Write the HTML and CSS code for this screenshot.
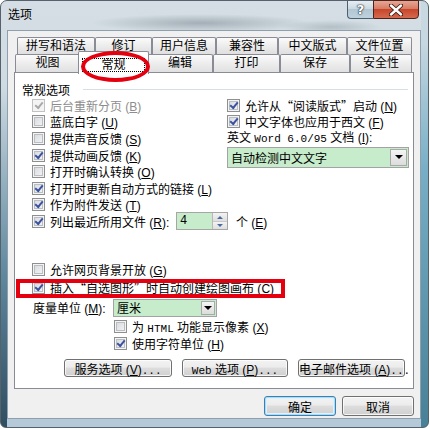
FILE: index.html
```html
<!DOCTYPE html>
<html lang="zh-CN">
<head>
    <meta charset="UTF-8">
    <title>选项</title>
    <link rel="stylesheet" href="styles.css">
</head>
<body>
    <div class="window">
        <!-- 标题栏 -->
        <div class="titlebar">
            <span class="title">选项</span>
            <div class="caption-btns">
                <span class="cap-help">?</span>
                <span class="cap-close">
                    <svg width="14" height="12" viewBox="0 0 14 12">
                        <path d="M2 1.5 L12 10.5 M12 1.5 L2 10.5" stroke="#3a1a12" stroke-width="4.2" stroke-linecap="round"/>
                        <path d="M2 1.5 L12 10.5 M12 1.5 L2 10.5" stroke="#fff" stroke-width="2.4" stroke-linecap="round"/>
                    </svg>
                </span>
            </div>
        </div>

        <div class="client">
            <!-- 选项卡 -->
            <div class="tab-row back">
                <div class="tab">拼写和语法</div>
                <div class="tab">修订</div>
                <div class="tab">用户信息</div>
                <div class="tab">兼容性</div>
                <div class="tab">中文版式</div>
                <div class="tab">文件位置</div>
            </div>
            <div class="tab-row front">
                <div class="tab">视图</div>
                <div class="tab selected"><span class="focus">常规</span></div>
                <div class="tab">编辑</div>
                <div class="tab">打印</div>
                <div class="tab">保存</div>
                <div class="tab">安全性</div>
            </div>

            <div class="panel">
                <div class="group-title"><span>常规选项</span><i class="rule"></i></div>

                <div class="cols">
                    <div class="col-left">
                        <div class="check disabled"><span class="box on"></span><span>后台重新分页 (<u>B</u>)</span></div>
                        <div class="check"><span class="box"></span><span>蓝底白字 (<u>U</u>)</span></div>
                        <div class="check"><span class="box"></span><span>提供声音反馈 (<u>S</u>)</span></div>
                        <div class="check"><span class="box on"></span><span>提供动画反馈 (<u>K</u>)</span></div>
                        <div class="check"><span class="box"></span><span>打开时确认转换 (<u>O</u>)</span></div>
                        <div class="check"><span class="box on"></span><span>打开时更新自动方式的链接 (<u>L</u>)</span></div>
                        <div class="check"><span class="box on"></span><span>作为附件发送 (<u>T</u>)</span></div>
                        <div class="check">
                            <span class="box on"></span>
                            <span class="recent-label">列出最近所用文件 (<u>R</u>):</span>
                            <span class="spin">
                                <span class="spin-val">4</span>
                                <span class="spin-btns">
                                    <span class="spin-up"><i></i></span>
                                    <span class="spin-down"><i></i></span>
                                </span>
                            </span>
                            <span class="unit">个 (<u>E</u>)</span>
                        </div>
                    </div>
                    <div class="col-right">
                        <div class="check"><span class="box on"></span><span>允许从<span class="cq">“阅读版式”</span>启动 (<u>N</u>)</span></div>
                        <div class="check"><span class="box on"></span><span>中文字体也应用于西文 (<u>F</u>)</span></div>
                        <div class="field-label">英文 <span class="lat">Word 6.0/95</span> 文档 (<u>I</u>):</div>
                        <div class="combo wide">
                            <span class="combo-text">自动检测中文文字</span>
                            <span class="combo-btn"><i></i></span>
                        </div>
                    </div>
                </div>

                <div class="lower">
                    <div class="check row-18"><span class="box"></span><span>允许网页背景开放 (<u>G</u>)</span></div>
                    <div class="check row-18"><span class="box on"></span><span>插入<span class="cq">“自选图形”</span>时自动创建绘图画布 (<u>C</u>)</span></div>
                    <div class="measure">
                        <span class="measure-label">度量单位 (<u>M</u>):</span>
                        <div class="combo small">
                            <span class="combo-text">厘米</span>
                            <span class="combo-btn"><i></i></span>
                        </div>
                    </div>
                    <div class="check row-18 sub"><span class="box"></span><span>为 <span class="lat">HTML</span> 功能显示像素 (<u>X</u>)</span></div>
                    <div class="check row-16 sub"><span class="box on"></span><span>使用字符单位 (<u>H</u>)</span></div>

                    <div class="panel-btns">
                        <button class="btn w108">服务选项 (<u>V</u>)<span class="lat">...</span></button>
                        <button class="btn w106"><span class="lat">Web</span>&nbsp;选项 (<u>P</u>)<span class="lat">...</span></button>
                        <button class="btn w107">电子邮件选项 (<u>A</u>)<span class="lat">...</span></button>
                    </div>
                </div>
            </div>

            <div class="dialog-btns">
                <button class="btn default">确定</button>
                <button class="btn">取消</button>
            </div>
        </div>

        <!-- 标注 -->
        <div class="mark-ellipse"></div>
        <div class="mark-box"></div>
    </div>
</body>
</html>
```

FILE: styles.css
```css
/* 基本样式 */
* {
    box-sizing: border-box;
}

body {
    margin: 0;
    background: #fff;
    font-family: "Liberation Sans", "Noto Sans CJK SC", sans-serif;
    font-size: 12px;
    color: #000;
}

u {
    text-decoration: underline;
    text-underline-offset: 1px;
}

.lat {
    font-family: "Liberation Mono", "Noto Sans CJK SC", monospace;
    font-size: 11px;
}

/* 中文引号用全角 */
.cq {
    font-family: "Noto Sans CJK SC", sans-serif;
}

/* 窗口外框 */
.window {
    position: relative;
    width: 429px;
    height: 428px;
    border: 1px solid #56616b;
    border-radius: 7px 7px 6px 6px;
    display: flex;
    flex-direction: column;
    background:
        radial-gradient(ellipse 110px 9px at 200px 22px, rgba(105, 118, 128, 0.45), transparent),
        radial-gradient(ellipse 50px 7px at 330px 26px, rgba(120, 132, 142, 0.35), transparent),
        linear-gradient(to bottom, rgba(170, 200, 215, 0) 20%, rgba(60, 110, 135, 0.75) 65%, rgba(25, 55, 75, 0.85) 100%) left top / 6px 100% no-repeat,
        linear-gradient(to bottom, rgba(150, 195, 215, 0.2) 10%, rgba(110, 170, 195, 0.9) 40%, rgba(60, 120, 145, 0.9) 100%) right top / 7px 100% no-repeat,
        linear-gradient(to bottom, #d5dee4, #c2d4df 60%, #b4cad8);
}

/* 标题栏 */
.titlebar {
    height: 29px;
    display: flex;
    align-items: flex-start;
}

.title {
    padding: 6px 0 0 7px;
    line-height: 16px;
    font-size: 12px;
}

.caption-btns {
    margin-left: auto;
    margin-right: 9px;
    display: flex;
    margin-top: -1px;
}

.cap-help {
    width: 26px;
    height: 19px;
    border: 1px solid #4f5f6d;
    border-right: none;
    border-radius: 0 0 0 4px;
    background: linear-gradient(to bottom, #e8eef2, #ccd9e2 45%, #b3c6d3 50%, #bed2de);
    color: #fff;
    font-family: "DejaVu Sans", sans-serif;
    font-weight: bold;
    font-size: 13px;
    line-height: 17px;
    text-align: center;
    text-shadow: 0 0 1px #26333d, 0 0 1px #26333d, 0 0 2px #26333d;
}

.cap-close {
    width: 46px;
    height: 19px;
    border: 1px solid #4d2219;
    border-radius: 0 0 4px 0;
    background: linear-gradient(to bottom, #e6a796, #d77d66 45%, #c8462a 50%, #d46a50);
    display: flex;
    align-items: center;
    justify-content: center;
}

/* 客户区 */
.client {
    flex: 1;
    margin: 0 7px 8px 6px;
    border: 1px solid #8f9fae;
    background: #f0f0f0;
    padding: 6px 6px 2px 6px;
    display: flex;
    flex-direction: column;
}

/* 选项卡 */
.tab-row {
    display: grid;
}

.tab-row.back {
    height: 17px;
    margin-left: 3px;
    grid-template-columns: 78px 57px 64px 62px 69px 65px;
}

.tab-row.front {
    height: 18px;
    margin-left: 1px;
    grid-template-columns: 65px 67px 66px 67px 70px 62px;
}

.tab {
    border: 1px solid #898c95;
    border-bottom: none;
    border-radius: 2px 2px 0 0;
    background: linear-gradient(to bottom, #fbfbfb, #ececec 50%, #dfdfdf);
    text-align: center;
    line-height: 16px;
}

.tab-row.front .tab {
    line-height: 17px;
}

.tab.selected {
    position: relative;
    z-index: 2;
    margin: -3px -2px -1px -2px;
    background: #fff;
    padding-top: 5px;
}

.focus {
    display: inline-block;
    padding: 0 18px;
    line-height: 12px;
    outline: 1px dotted #000;
}

/* 选项面板 */
.panel {
    height: 317px;
    border: 1px solid #898c95;
    background: #fff;
    padding: 9px 5px 0 7px;
    display: flex;
    flex-direction: column;
}

.group-title {
    height: 15px;
    display: flex;
    align-items: center;
}

.rule {
    flex: 1;
    height: 1px;
    margin-left: 13px;
    background: #d5dfe5;
}

.cols {
    display: grid;
    grid-template-columns: 204px 1fr;
}

.col-left {
    padding-left: 10px;
}

.col-right {
    padding-left: 1px;
}

.check {
    display: flex;
    align-items: center;
    gap: 5px;
    height: 16.6px;
    white-space: nowrap;
}

.check > * {
    flex: none;
}

.check.disabled {
    color: #8d8d8d;
}

/* 复选框 */
.box {
    width: 13px;
    height: 13px;
    border: 1px solid #8e8f8f;
    background: linear-gradient(135deg, #d3d6db, #f7f7f7);
    box-shadow: inset 0 0 0 1px #f4f4f4, inset 0 0 0 2px #b9bec4;
    display: flex;
    align-items: center;
    justify-content: center;
}

.box.on::after {
    content: "";
    width: 6px;
    height: 3px;
    margin-top: -2px;
    border-left: 2px solid #3b51a0;
    border-bottom: 2px solid #3b51a0;
    transform: rotate(-50deg);
}

.disabled .box {
    border-color: #c2c2c2;
    background: #f4f4f4;
    box-shadow: none;
}

.disabled .box.on::after {
    border-color: #a9a9a9;
}

.recent-label {
    width: 121px;
}

/* 数字框 */
.spin {
    display: flex;
    width: 52px;
    height: 18px;
    border: 1px solid #a6a6a6;
}

.spin-val {
    flex: 1;
    background: #c7eccb;
    padding-left: 3px;
    line-height: 16px;
    font-family: "Liberation Mono", monospace;
}

.spin-btns {
    width: 15px;
    display: flex;
    flex-direction: column;
    border-left: 1px solid #b8b8b8;
}

.spin-up,
.spin-down {
    flex: 1;
    display: flex;
    align-items: center;
    justify-content: center;
    background: linear-gradient(to bottom, #f3f3f3, #dedede);
}

.spin-up {
    border-bottom: 1px solid #c9c9c9;
}

.spin-up i {
    border-left: 3px solid transparent;
    border-right: 3px solid transparent;
    border-bottom: 3px solid #4c6a9c;
}

.spin-down i {
    border-left: 3px solid transparent;
    border-right: 3px solid transparent;
    border-top: 3px solid #4c6a9c;
}

.unit {
    margin-left: 3px;
}

/* 下拉框 */
.field-label {
    height: 16.6px;
    line-height: 16.6px;
    white-space: nowrap;
}

.combo {
    display: flex;
    border: 1px solid #a3a3a3;
    background: #c7eccb;
}

.combo.wide {
    width: 182px;
    height: 21px;
}

.combo.small {
    width: 104px;
    height: 18px;
}

.combo-text {
    flex: 1;
    padding-left: 3px;
    display: flex;
    align-items: center;
}

.combo-btn {
    width: 17px;
    margin: 1px;
    border: 1px solid #a9a9a9;
    background: linear-gradient(to bottom, #f5f5f5, #dcdcdc);
    display: flex;
    align-items: center;
    justify-content: center;
}

.combo.small .combo-btn {
    width: 14px;
}

.combo-btn i {
    border-left: 4px solid transparent;
    border-right: 4px solid transparent;
    border-top: 4px solid #000;
}

/* 下部选项 */
.lower {
    margin-top: 31px;
    display: flex;
    flex-direction: column;
}

.lower > .check {
    padding-left: 10px;
}

.check.row-18 {
    height: 18px;
}

.check.row-16 {
    height: 16px;
}

.lower > .check.sub {
    padding-left: 92px;
}

.measure {
    height: 20px;
    margin-top: 1px;
    padding-left: 11px;
    display: flex;
    align-items: center;
}

.measure-label {
    width: 80px;
}

/* 按钮 */
.btn {
    font: inherit;
    color: #000;
    height: 18px;
    padding: 0;
    border: 1px solid #707070;
    border-radius: 3px;
    background: linear-gradient(to bottom, #f3f3f3, #ececec 45%, #dddddd 50%, #d0d0d0);
    box-shadow: inset 0 0 0 1px rgba(255, 255, 255, 0.75);
    white-space: nowrap;
    text-align: center;
}

.panel-btns {
    display: flex;
    gap: 10px;
    margin-top: 7px;
    padding-left: 42px;
}

.w108 { width: 108px; }
.w106 { width: 106px; }
.w107 { width: 107px; }

.dialog-btns {
    display: flex;
    justify-content: flex-end;
    gap: 6px;
    margin-top: 7px;
}

.dialog-btns .btn {
    width: 72px;
    height: 20px;
}

.btn.default {
    border-color: #3c7fb1;
    box-shadow: inset 0 0 0 1px #a9dcf6, inset 0 0 0 2px #dff2fc;
}

/* 红色标注 */
.mark-ellipse {
    position: absolute;
    left: 80px;
    top: 50px;
    width: 69px;
    height: 31px;
    border: 4px solid #e5000f;
    border-radius: 50%;
    z-index: 5;
}

.mark-box {
    position: absolute;
    left: 15px;
    top: 278px;
    width: 269px;
    height: 19px;
    border: 4px solid #e5000f;
    z-index: 5;
}
```
